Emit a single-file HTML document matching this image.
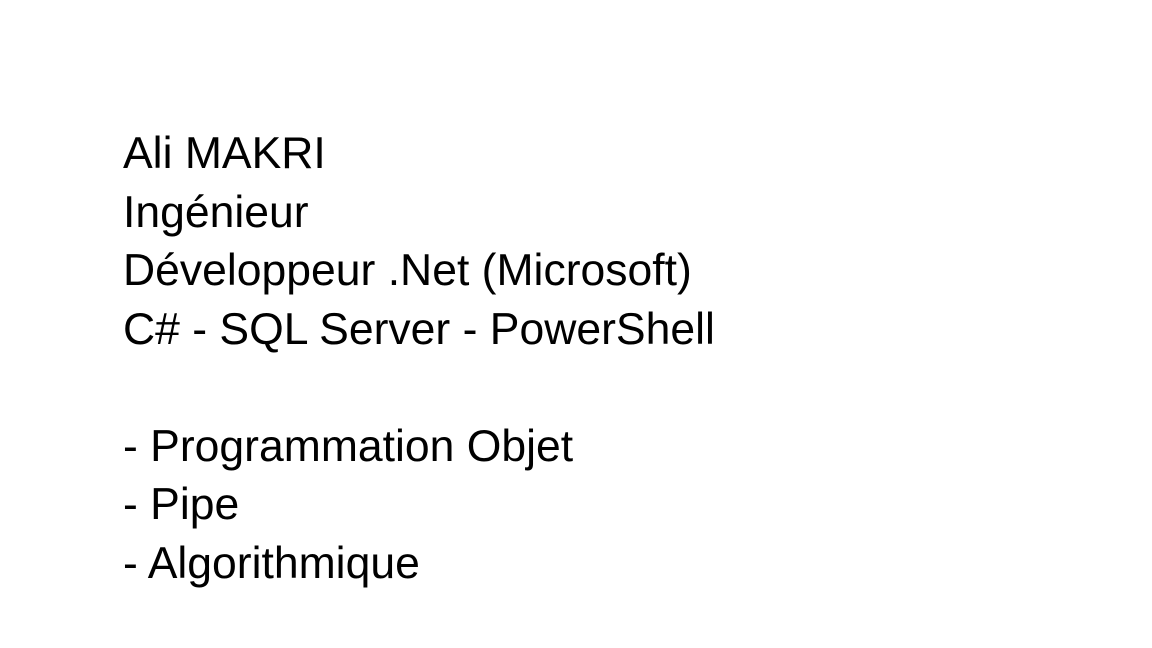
<!DOCTYPE html>
<html><head><meta charset="utf-8"><style>
html,body{margin:0;padding:0;background:#fff;width:1152px;height:648px;overflow:hidden}
.t{position:absolute;left:123px;top:125px;font-family:"Liberation Sans",sans-serif;font-size:44.5px;line-height:58.5px;color:#000;white-space:pre}
</style></head><body>
<div class="t">Ali MAKRI
Ingénieur
Développeur .Net (Microsoft)
C# - SQL Server - PowerShell

- Programmation Objet
- Pipe
- Algorithmique</div>
</body></html>
